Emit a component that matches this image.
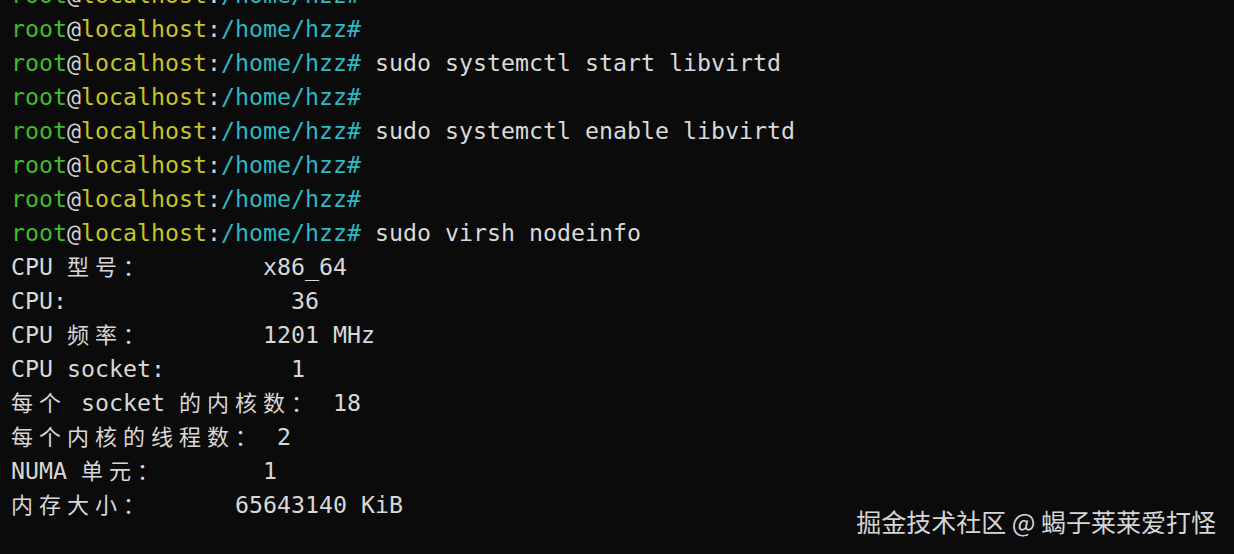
import React from 'react';

const mono = { fontFamily: '"DejaVu Sans Mono", "Liberation Mono", "Noto Sans CJK SC", monospace' };

// CJK glyphs take two terminal cells (28px), like in the real terminal
const isWide = (ch) => /[\u3000-\u9fff\uff00-\uffef]/.test(ch);

const Cells = ({ text }) => (
    <>
        {Array.from(text).map((ch, i) =>
            isWide(ch) ? (
                <span
                    key={i}
                    className="inline-block w-[28px] text-[22px] leading-none text-left"
                    style={{ fontFamily: '"Noto Sans CJK SC", sans-serif' }}
                >
                    {ch}
                </span>
            ) : (
                <span key={i}>{ch}</span>
            )
        )}
    </>
);

const Prompt = ({ cmd }) => (
    <div className="h-[34px] leading-[34px] whitespace-pre">
        <span className="text-[#3fbd2e]">root</span>
        <span className="text-[#d2d2d2]">@</span>
        <span className="text-[#c6c52a]">localhost</span>
        <span className="text-[#d2d2d2]">:</span>
        <span className="text-[#2cb9c4]">/home/hzz#</span>
        {cmd && <span className="text-[#dadada]"> {cmd}</span>}
    </div>
);

// label, column (in cells) where the value starts, value
const info = [
    ['CPU 型号：', 18, 'x86_64'],
    ['CPU:', 20, '36'],
    ['CPU 频率：', 18, '1201 MHz'],
    ['CPU socket:', 20, '1'],
    ['每个 socket 的内核数：', 23, '18'],
    ['每个内核的线程数：', 19, '2'],
    ['NUMA 单元：', 18, '1'],
    ['内存大小：', 16, '65643140 KiB'],
];

const cellWidth = (s) => Array.from(s).reduce((n, ch) => n + (isWide(ch) ? 2 : 1), 0);

const InfoLine = ({ label, col, value }) => (
    <div className="h-[34px] leading-[34px] whitespace-pre text-[#d8d8d8]">
        <Cells text={label} />
        <span>{' '.repeat(Math.max(1, col - cellWidth(label)))}</span>
        <span>{value}</span>
    </div>
);

const App = () => {
    return (
        <div className="relative w-[1234px] h-[554px] overflow-hidden bg-[#0b0b0b]">
            <div className="pl-[11px] -mt-[22px] text-[23.25px]" style={mono}>
                <Prompt />
                <Prompt />
                <Prompt cmd="sudo systemctl start libvirtd" />
                <Prompt />
                <Prompt cmd="sudo systemctl enable libvirtd" />
                <Prompt />
                <Prompt />
                <Prompt cmd="sudo virsh nodeinfo" />
                {info.map(([label, col, value]) => (
                    <InfoLine key={label} label={label} col={col} value={value} />
                ))}
            </div>

            {/* watermark */}
            <div
                className="absolute right-[18px] bottom-[20px] text-[25px] leading-none text-[#d6d6d6]"
                style={{ fontFamily: '"Noto Sans CJK SC", sans-serif' }}
            >
                掘金技术社区 @ 蝎子莱莱爱打怪
            </div>
        </div>
    );
};

export default App;
